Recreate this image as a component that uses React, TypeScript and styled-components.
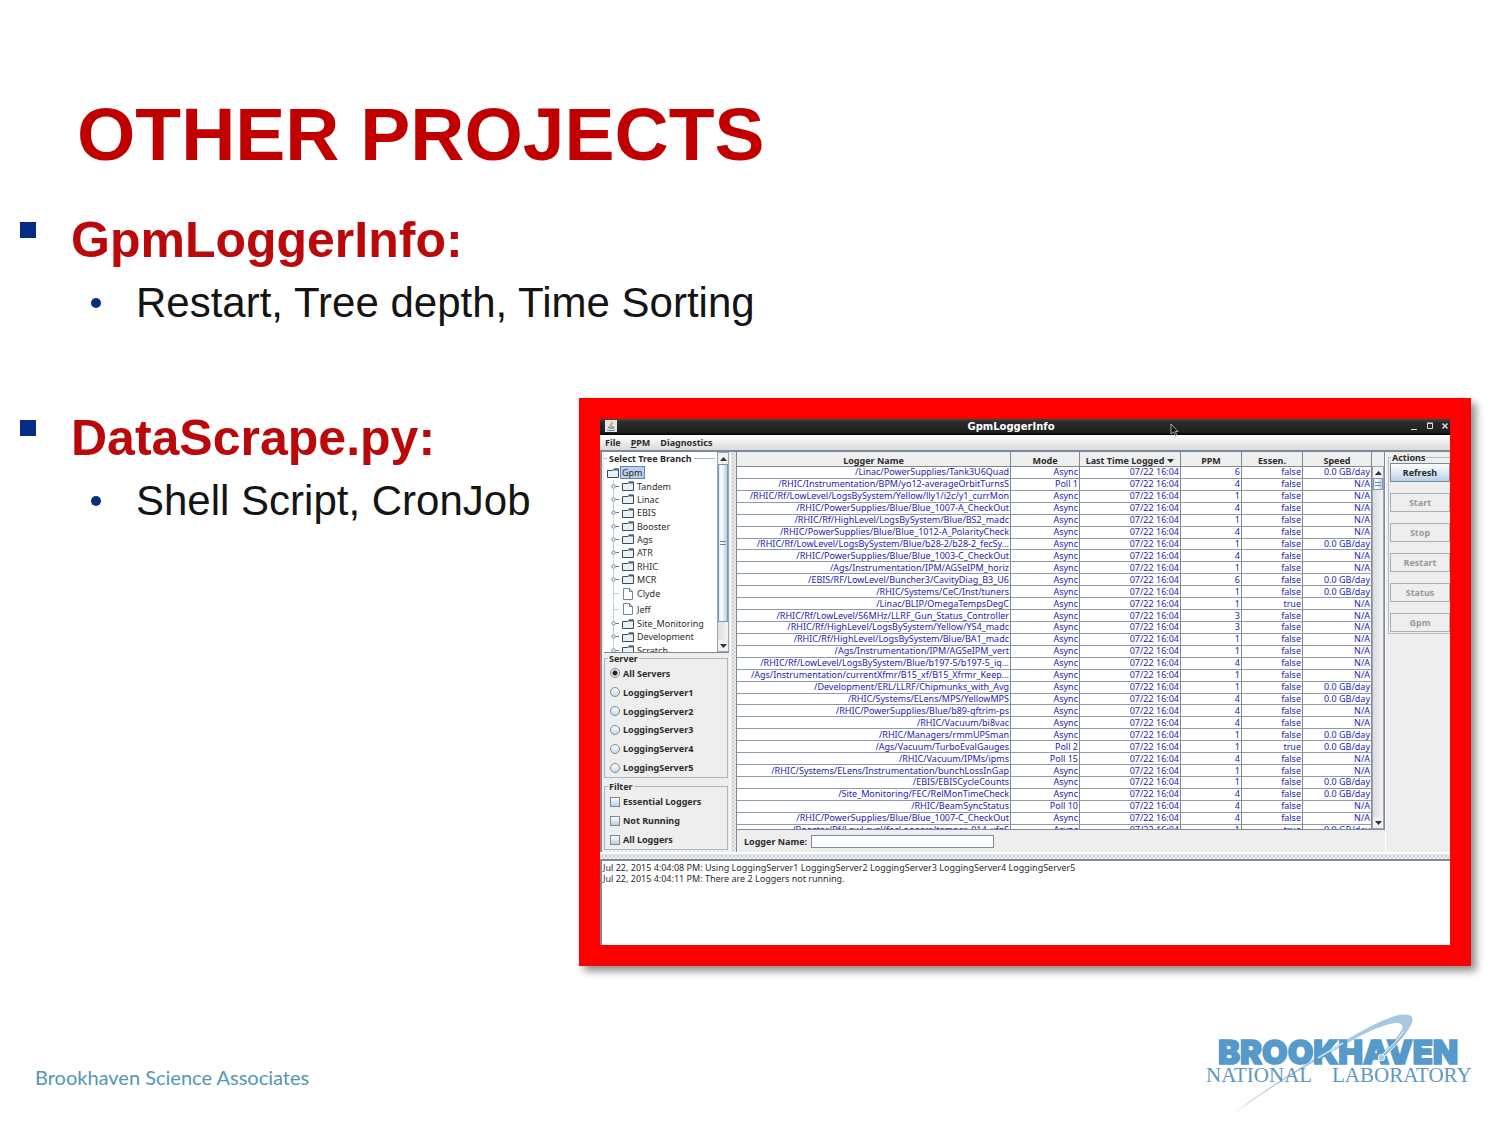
import React from "react";
import styled, { createGlobalStyle, css } from "styled-components";

const ui = `"Noto Sans", "Open Sans", sans-serif`;
const edge = "#7a8a99";
const panel = "#eeeeee";

const Global = createGlobalStyle`
  *, *::before, *::after { box-sizing: border-box; }
  body { margin: 0; background: #fff; font-family: "Liberation Sans", Arial, sans-serif; }
  h1, h2, p, ul { margin: 0; padding: 0; }
  ul { list-style: none; }
  button, input { font: inherit; color: inherit; margin: 0; }
`;

/* ---------- slide ---------- */

const Slide = styled.div`
  min-height: 100vh;
  display: flex;
  flex-direction: column;
  padding-top: 92px;
`;

const Title = styled.h1`
  padding-left: 77px;
  font-size: 75px;
  line-height: 84px;
  color: #c00000;
`;

const Topics = styled.main`
  padding: 34px 29px 0 20px;
`;

const Topic = styled.section`
  display: flex;
  flex-direction: column;
  gap: 8px;
`;

const TopicTitle = styled.h2`
  display: flex;
  gap: 35px;
  font-size: 50px;
  line-height: 60px;
  color: #b9090b;

  &::before {
    content: "";
    width: 16px;
    height: 16px;
    margin-top: 12px;
    background: #062c84;
  }
`;

const Points = styled.ul`
  padding-left: 71px;
  font-size: 42px;
  line-height: 50px;
  color: #141414;
`;

const Point = styled.li`
  display: flex;
  align-items: center;
  gap: 35px;
  white-space: nowrap;

  &::before {
    content: "";
    width: 10px;
    height: 10px;
    border-radius: 50%;
    background: #062c84;
  }
`;

const Split = styled.div`
  display: grid;
  grid-template-columns: 559px minmax(0, 1fr);
  align-items: start;
  padding-top: 70px;

  > ${Topic} { padding-top: 10px; }
`;

const Frame = styled.div`
  padding: 21px;
  background: #fe0000;
  box-shadow: 5px 5px 8px rgba(0, 0, 0, 0.45);
`;

const Footer = styled.footer`
  display: flex;
  justify-content: space-between;
  align-items: center;
  margin-top: auto;
  padding: 0 24px 9px 35px;
`;

const Associates = styled.p`
  padding-top: 28px;
  font-family: Lato, "Open Sans", sans-serif;
  font-size: 20px;
  line-height: 24px;
  color: #5596b6;
`;

/* ---------- application window ---------- */

const Window = styled.div`
  font-family: ${ui};
  font-size: 9px;
  line-height: 11px;
  color: #2c2c2c;
  background: ${panel};
`;

const TitleBar = styled.div`
  position: relative;
  display: grid;
  grid-template-columns: 1fr auto 1fr;
  align-items: center;
  height: 16px;
  padding: 0 0 2px 5px;
  background: linear-gradient(#454545, #2a2c2c 20%, #1f2121 80%, #000);
  color: #fff;
  font-family: "DejaVu Sans", sans-serif;
  font-size: 10px;
  font-weight: 700;
`;

const WindowTitle = styled.span`
  padding-right: 33px;
`;

const Pointer = styled.svg`
  position: absolute;
  left: 67%;
  top: 4px;
`;

const WindowButtons = styled.div`
  display: flex;
  justify-content: flex-end;
  gap: 4px;
`;

const WindowButton = styled.button`
  display: flex;
  padding: 0;
  border: 0;
  background: none;
`;

const MenuBar = styled.nav`
  display: flex;
  gap: 10px;
  height: 17px;
  padding: 0 5px;
  border-bottom: 2px solid ${edge};
  background: linear-gradient(#fff, #dadada);
`;

const MenuButton = styled.button`
  padding: 0;
  border: 0;
  background: none;
  font-weight: 700;
`;

const Body = styled.div`
  display: grid;
  grid-template-columns: 130px 7px minmax(0, 1fr) 64px;
  height: 400px;
`;

const dots = css`
  background-color: #f2f2f2;
  background-image: radial-gradient(circle, #a3abb1 0 0.5px, transparent 1px),
    radial-gradient(circle, #bcc3c8 0 0.5px, transparent 1px);
  background-size: 4px 4px;
  background-position: 0 0, 2px 2px;
`;

const SplitterV = styled.div`
  ${dots}
  border-right: 1px solid ${edge};
  border-left: 1px solid #fff;
`;

const SplitterH = styled.div`
  ${dots}
  height: 9px;
  border-top: 2px solid #fff;
  border-bottom: 2px solid ${edge};
`;

const Sidebar = styled.div`
  display: flex;
  flex-direction: column;
  padding: 0 1px 1px 2px;
  border-left: 2px solid ${edge};
  min-width: 0;
`;

const TreePane = styled.div`
  display: flex;
  height: 201px;
  background: #fff;
  border-bottom: 1px solid ${edge};
`;

const Group = styled.fieldset<{ $spaced?: boolean }>`
  display: flex;
  flex-direction: column;
  min-width: 0;
  margin: 0 1px ${(p) => (p.$spaced ? 3 : 0)}px 0;
  padding: 0 0 0 5px;
  border: 1px solid #a9b5c0;
  font-weight: 700;

  > legend { padding: 0 1px; margin-left: -2px; }
`;

const TreeGroup = styled.div`
  flex: 1;
  min-width: 0;
  overflow: hidden;
`;

const TreeLegend = styled.p`
  display: flex;
  gap: 2px;
  align-items: center;
  padding-top: 1px;
  font-weight: 700;
  white-space: nowrap;

  &::before, &::after { content: ""; height: 1px; background: #a9b5c0; }
  &::before { width: 3px; }
  &::after { flex: 1; margin-right: 2px; }
`;

const Tree = styled.ul`
  display: flex;
  flex-direction: column;
  height: 191px;
  margin-top: 2px;
  padding-left: 3px;
`;

const TreeItem = styled.li<{ $root?: boolean; $leaf?: boolean }>`
  display: flex;
  align-items: center;
  gap: 2px;
  flex: ${(p) => (p.$leaf ? 15 : 13)} 0 0;
  min-height: 0;
  padding-left: ${(p) => (p.$root ? 0 : 3)}px;
  white-space: nowrap;

  > svg { flex: none; }
`;

const NodeName = styled.span<{ $selected?: boolean }>`
  padding: 0 1px;
  ${(p) =>
    p.$selected &&
    css`
      background: #b8cfe5;
      outline: 1px solid #6382bf;
    `}
`;

const Scroll = styled.div`
  display: flex;
  flex-direction: column;
  flex: none;
  width: 12px;
  border: 1px solid #9aa7b3;
  background: linear-gradient(90deg, #dcdcdc, #f4f4f4);
`;

const ScrollArrow = styled.button`
  display: grid;
  place-items: center;
  height: 11px;
  padding: 0;
  border: 0;
  background: #f1f1f1;
`;

const Thumb = styled.div<{ $size: number }>`
  display: grid;
  place-items: center;
  height: ${(p) => p.$size}px;
  border: 1px solid #7c97b8;
  background: linear-gradient(90deg, #d9e7f5, #fff 30%, #b8cfe5);

  &::before {
    content: "";
    width: 6px;
    height: 4px;
    border: solid #6382bf;
    border-width: 1px 0;
  }
`;

const Track = styled.div`
  flex: 1;
`;

const Options = styled.div<{ $rows: number }>`
  display: flex;
  flex-direction: column;
  height: ${(p) => (p.$rows === 6 ? 113 : 57)}px;
`;

const Option = styled.label`
  display: flex;
  align-items: center;
  gap: 3px;
  flex: 1;
  white-space: nowrap;
`;

const Radio = styled.input.attrs({ type: "radio" })`
  appearance: none;
  width: 10px;
  height: 10px;
  border: 1px solid ${edge};
  border-radius: 50%;
  background: linear-gradient(#fff, #c8daec);

  &:checked { background: radial-gradient(circle, #222 0 2px, #e8eef5 3px); }
`;

const Check = styled.input.attrs({ type: "checkbox" })`
  appearance: none;
  width: 10px;
  height: 10px;
  border: 1px solid ${edge};
  background: linear-gradient(#fff, #b8cfe5);
`;

const Center = styled.div`
  display: flex;
  flex-direction: column;
  min-width: 0;
  border-right: 1px solid #fff;
`;

const TableArea = styled.div`
  display: flex;
  height: 378px;
  border-bottom: 1px solid ${edge};
`;

const TableClip = styled.div`
  flex: 1;
  min-width: 0;
  overflow: hidden;
  background: #fff;
`;

const Table = styled.table`
  width: 100%;
  height: 385px;
  table-layout: fixed;
  border-collapse: separate;
  border-spacing: 0;
`;

const Col = styled.col<{ $w?: number }>`
  ${(p) => p.$w && `width: ${p.$w}px;`}
`;

const Head = styled.th`
  height: 15px;
  padding: 2px 0 0;
  border-right: 1px solid ${edge};
  border-bottom: 1px solid ${edge};
  background: ${panel};
  white-space: nowrap;
  line-height: 11px;

  > svg { margin-left: 3px; vertical-align: 1px; }
`;

const Cell = styled.td`
  padding: 0 1px;
  border-right: 1px solid ${edge};
  border-bottom: 1px solid #8f9ca8;
  color: #1c1cb4;
  line-height: 10px;
  text-align: right;
  white-space: nowrap;
`;

const TableScroll = styled.div`
  display: flex;
  flex-direction: column;
  width: 13px;
  padding-top: 14px;
  border-right: 1px solid ${edge};

  > ${Scroll} { flex: 1; }
`;

const NameRow = styled.label`
  display: flex;
  align-items: center;
  gap: 4px;
  flex: 1;
  padding-left: 7px;
  font-weight: 700;
`;

const NameInput = styled.input`
  width: 183px;
  height: 13px;
  padding: 0 2px;
  border: 1px solid ${edge};
  background: #fff;
`;

const ActionsPane = styled.aside`
  padding-left: 2px;
`;

const Actions = styled.fieldset`
  display: flex;
  flex-direction: column;
  gap: 11px;
  margin: 0;
  min-width: 0;
  padding: 0 0 1px 1px;
  border: 1px solid #b5bec7;
  border-right: 0;

  > legend { padding: 0 1px; margin-left: 1px; font-weight: 700; }
`;

const Action = styled.button`
  height: 19px;
  padding: 0;
  border: 1px solid ${edge};
  background: linear-gradient(#fff, #dde8f3 50%, #b8cfe5);
  font-weight: 700;

  &:disabled {
    border-color: #a8afb5;
    background: ${panel};
    color: #999;
  }
`;

const Console = styled.div`
  height: 84px;
  padding: 1px 0 0 1px;
  border-left: 2px solid ${edge};
  background: #fff;
`;

/* ---------- drawings ---------- */

const Arrow = ({ up = false }: { up?: boolean }) => (
  <svg width="7" height="4" viewBox="0 0 7 4" aria-hidden="true">
    <path d={up ? "M0 4 3.5 0 7 4z" : "M0 0 3.5 4 7 0z"} fill="#333" />
  </svg>
);

const Handle = () => (
  <svg width="10" height="13" viewBox="0 0 10 13" aria-hidden="true">
    <path d="M3.5 0v4M3.5 9v4" stroke="#b8cfe5" fill="none" />
    <path d="M5.5 6.500H9" stroke="#5f7da3" fill="none" />
    <circle cx="3.5" cy="6.5" r="1.7" fill="#fff" stroke="#5f7da3" />
  </svg>
);

const Twig = () => (
  <svg width="10" height="15" viewBox="0 0 10 15" aria-hidden="true">
    <path d="M3.5 0v15M3.5 7.5H9" stroke="#b8cfe5" fill="none" />
  </svg>
);

const Folder = () => (
  <svg width="12" height="10" viewBox="0 0 12 10" aria-hidden="true">
    <path d="M.5 2.5H6L7 1h4.500V9.500H.5z" fill="#e9f0f8" stroke="#3b4a5c" />
    <path d="M7 1.500h4.500" stroke="#4d6583" strokeWidth="2" />
  </svg>
);

const Page = () => (
  <svg width="12" height="12" viewBox="0 0 12 12" aria-hidden="true">
    <path d="M1.500.5h6l3 3v8h-9zM7.500.5v3h3" fill="#fff" stroke="#6d87a8" />
  </svg>
);

const JavaIcon = () => (
  <svg width="12" height="12" viewBox="0 0 12 12" aria-hidden="true">
    <path d="M0 0h12v12H0z" fill="#e6e6e2" />
    <path d="M6.500 1.500C8 3 4 4 5.500 6M8 3C6 4.500 7 5 6.500 6" stroke="#c0713a" fill="none" strokeWidth=".8" />
    <path d="M3 7h5c0 2-4 2-5 0M8 7c2 0 1 1.500-.5 1.500M2 10c2 .8 6 .8 8 0" stroke="#5b7690" fill="none" strokeWidth=".9" />
  </svg>
);

const Logo = () => (
  <svg width="276" height="106" viewBox="0 0 276 106" role="img" aria-label="Brookhaven National Laboratory">
    <path
      d="M33 104C70 76 108 52 143 32C168 17 190 5 204 4.500C213 4 214 9 211 15C205 27 194 36 184 46L181 44C190 35 199 26 202 19C204 13 198 12 190 14C174 18 160 26 143 35.500C108 55 70 77 33 104z"
      fill="#a9c9e2"
    />
    <text
      x="18"
      y="54"
      fontFamily="Inter, sans-serif"
      fontWeight="900"
      fontSize="33"
      fill="#559aca"
      stroke="#559aca"
      strokeWidth="1.6"
    >
      BROOKHAVEN
    </text>
    <path d="M118 48 143 33" stroke="#cfe1ef" strokeWidth="1.500" fill="none" />
    <path d="M182 47C192 37 201 29 205 22" stroke="#fff" strokeWidth="3.500" fill="none" />
    <path d="M182 47C192 37 201 29 205 22" stroke="#8db8d9" strokeWidth="2" fill="none" />
    <circle cx="181.500" cy="47.500" r="3.200" fill="#a9c9e2" stroke="#fff" />
    <g fontFamily="'Liberation Serif', serif" fontSize="21" fill="#5f97bd">
      <text x="6" y="72">NATIONAL</text>
      <text x="132" y="72">LABORATORY</text>
    </g>
  </svg>
);

/* ---------- data ---------- */

const branches = [
  "Tandem", "Linac", "EBIS", "Booster", "Ags", "ATR", "RHIC", "MCR",
  "Clyde", "Jeff", "Site_Monitoring", "Development", "Scratch",
];
const leaves = ["Clyde", "Jeff"];

const servers = [
  "All Servers", "LoggingServer1", "LoggingServer2",
  "LoggingServer3", "LoggingServer4", "LoggingServer5",
];
const filters = ["Essential Loggers", "Not Running", "All Loggers"];
const actions = ["Refresh", "Start", "Stop", "Restart", "Status", "Gpm"];

const GB = "0.0 GB/day";
const NA = "N/A";
type Logger = [name: string, mode: string, ppm: number, essential: boolean, speed: string];

const loggers: Logger[] = [
  ["/Linac/PowerSupplies/Tank3U6Quad", "Async", 6, false, GB],
  ["/RHIC/Instrumentation/BPM/yo12-averageOrbitTurnsS", "Poll 1", 4, false, NA],
  ["/RHIC/Rf/LowLevel/LogsBySystem/Yellow/lly1/i2c/y1_currMon", "Async", 1, false, NA],
  ["/RHIC/PowerSupplies/Blue/Blue_1007-A_CheckOut", "Async", 4, false, NA],
  ["/RHIC/Rf/HighLevel/LogsBySystem/Blue/BS2_madc", "Async", 1, false, NA],
  ["/RHIC/PowerSupplies/Blue/Blue_1012-A_PolarityCheck", "Async", 4, false, NA],
  ["/RHIC/Rf/LowLevel/LogsBySystem/Blue/b28-2/b28-2_fecSy...", "Async", 1, false, GB],
  ["/RHIC/PowerSupplies/Blue/Blue_1003-C_CheckOut", "Async", 4, false, NA],
  ["/Ags/Instrumentation/IPM/AGSeIPM_horiz", "Async", 1, false, NA],
  ["/EBIS/RF/LowLevel/Buncher3/CavityDiag_B3_U6", "Async", 6, false, GB],
  ["/RHIC/Systems/CeC/Inst/tuners", "Async", 1, false, GB],
  ["/Linac/BLIP/OmegaTempsDegC", "Async", 1, true, NA],
  ["/RHIC/Rf/LowLevel/56MHz/LLRF_Gun_Status_Controller", "Async", 3, false, NA],
  ["/RHIC/Rf/HighLevel/LogsBySystem/Yellow/YS4_madc", "Async", 3, false, NA],
  ["/RHIC/Rf/HighLevel/LogsBySystem/Blue/BA1_madc", "Async", 1, false, NA],
  ["/Ags/Instrumentation/IPM/AGSeIPM_vert", "Async", 1, false, NA],
  ["/RHIC/Rf/LowLevel/LogsBySystem/Blue/b197-5/b197-5_iq...", "Async", 4, false, NA],
  ["/Ags/Instrumentation/currentXfmr/B15_xf/B15_Xfrmr_Keep...", "Async", 1, false, NA],
  ["/Development/ERL/LLRF/Chipmunks_with_Avg", "Async", 1, false, GB],
  ["/RHIC/Systems/ELens/MPS/YellowMPS", "Async", 4, false, GB],
  ["/RHIC/PowerSupplies/Blue/b89-qftrim-ps", "Async", 4, false, NA],
  ["/RHIC/Vacuum/bi8vac", "Async", 4, false, NA],
  ["/RHIC/Managers/rmmUPSman", "Async", 1, false, GB],
  ["/Ags/Vacuum/TurboEvalGauges", "Poll 2", 1, true, GB],
  ["/RHIC/Vacuum/IPMs/ipms", "Poll 15", 4, false, NA],
  ["/RHIC/Systems/ELens/Instrumentation/bunchLossInGap", "Async", 1, false, NA],
  ["/EBIS/EBISCycleCounts", "Async", 1, false, GB],
  ["/Site_Monitoring/FEC/RelMonTimeCheck", "Async", 4, false, GB],
  ["/RHIC/BeamSyncStatus", "Poll 10", 4, false, NA],
  ["/RHIC/PowerSupplies/Blue/Blue_1007-C_CheckOut", "Async", 4, false, NA],
  ["/Booster/Rf/LowLevel/fecLoggers/temper_014_xfgS", "Async", 1, true, GB],
];

/* ---------- window parts ---------- */

const ScrollBar = ({ thumb }: { thumb: number }) => (
  <Scroll>
    <ScrollArrow aria-label="Scroll up"><Arrow up /></ScrollArrow>
    <Thumb $size={thumb} />
    <Track />
    <ScrollArrow aria-label="Scroll down"><Arrow /></ScrollArrow>
  </Scroll>
);

const LoggerTable = () => (
  <Table>
    <colgroup>
      <Col />
      <Col $w={69} />
      <Col $w={101} />
      <Col $w={61} />
      <Col $w={61} />
      <Col $w={69} />
    </colgroup>
    <thead>
      <tr>
        <Head>Logger Name</Head>
        <Head>Mode</Head>
        <Head>Last Time Logged<Arrow /></Head>
        <Head>PPM</Head>
        <Head>Essen.</Head>
        <Head>Speed</Head>
      </tr>
    </thead>
    <tbody>
      {loggers.map(([name, mode, ppm, essential, speed]) => (
        <tr key={name}>
          <Cell>{name}</Cell>
          <Cell>{mode}</Cell>
          <Cell>07/22 16:04</Cell>
          <Cell>{ppm}</Cell>
          <Cell>{String(essential)}</Cell>
          <Cell>{speed}</Cell>
        </tr>
      ))}
    </tbody>
  </Table>
);

const LoggerWindow = () => (
  <Window>
    <TitleBar>
      <JavaIcon />
      <WindowTitle>GpmLoggerInfo</WindowTitle>
      <WindowButtons>
        <WindowButton aria-label="Minimize">
          <svg width="12" height="10" viewBox="0 0 12 10"><path d="M3 8.500h6" stroke="#ddd" /></svg>
        </WindowButton>
        <WindowButton aria-label="Maximize">
          <svg width="12" height="10" viewBox="0 0 12 10"><path d="M3.500 2.500h5v5h-5zM3 2h6" stroke="#ddd" fill="none" /></svg>
        </WindowButton>
        <WindowButton aria-label="Close">
          <svg width="10" height="10" viewBox="0 0 10 10"><path d="M2.500 2.500l5 5m0-5l-5 5" stroke="#ddd" strokeWidth="1.500" /></svg>
        </WindowButton>
      </WindowButtons>
      <Pointer width="10" height="14" viewBox="0 0 10 14" aria-hidden="true">
        <path d="M1 1v10l2.500-2 2 4 1.500-.8-1.800-3.700H8z" fill="#111" stroke="#ccc" strokeWidth=".8" />
      </Pointer>
    </TitleBar>
    <MenuBar>
      <MenuButton>File</MenuButton>
      <MenuButton><u>P</u>PM</MenuButton>
      <MenuButton>Diagnostics</MenuButton>
    </MenuBar>
    <Body>
      <Sidebar>
        <TreePane>
          <TreeGroup>
            <TreeLegend>Select Tree Branch</TreeLegend>
            <Tree>
              <TreeItem $root>
                <Folder />
                <NodeName $selected>Gpm</NodeName>
              </TreeItem>
              {branches.map((name) => {
                const leaf = leaves.includes(name);
                return (
                  <TreeItem key={name} $leaf={leaf}>
                    {leaf ? <Twig /> : <Handle />}
                    {leaf ? <Page /> : <Folder />}
                    <NodeName>{name}</NodeName>
                  </TreeItem>
                );
              })}
            </Tree>
          </TreeGroup>
          <ScrollBar thumb={158} />
        </TreePane>
        <Group $spaced>
          <legend>Server</legend>
          <Options $rows={6}>
            {servers.map((name, i) => (
              <Option key={name}>
                <Radio name="server" defaultChecked={i === 0} />
                {name}
              </Option>
            ))}
          </Options>
        </Group>
        <Group>
          <legend>Filter</legend>
          <Options $rows={3}>
            {filters.map((name) => (
              <Option key={name}>
                <Check />
                {name}
              </Option>
            ))}
          </Options>
        </Group>
      </Sidebar>
      <SplitterV />
      <Center>
        <TableArea>
          <TableClip>
            <LoggerTable />
          </TableClip>
          <TableScroll>
            <ScrollBar thumb={12} />
          </TableScroll>
        </TableArea>
        <NameRow>
          Logger Name:
          <NameInput type="text" />
        </NameRow>
      </Center>
      <ActionsPane>
        <Actions>
          <legend>Actions</legend>
          {actions.map((name, i) => (
            <Action key={name} type="button" disabled={i > 0}>{name}</Action>
          ))}
        </Actions>
      </ActionsPane>
    </Body>
    <SplitterH />
    <Console>
      <p>Jul 22, 2015 4:04:08 PM: Using LoggingServer1 LoggingServer2 LoggingServer3 LoggingServer4 LoggingServer5</p>
      <p>Jul 22, 2015 4:04:11 PM: There are 2 Loggers not running.</p>
    </Console>
  </Window>
);

export default function App() {
  return (
    <Slide>
      <Global />
      <Title>OTHER PROJECTS</Title>
      <Topics>
        <Topic>
          <TopicTitle>GpmLoggerInfo:</TopicTitle>
          <Points>
            <Point>Restart, Tree depth, Time Sorting</Point>
          </Points>
        </Topic>
        <Split>
          <Topic>
            <TopicTitle>DataScrape.py:</TopicTitle>
            <Points>
              <Point>Shell Script, CronJob</Point>
            </Points>
          </Topic>
          <Frame>
            <LoggerWindow />
          </Frame>
        </Split>
      </Topics>
      <Footer>
        <Associates>Brookhaven Science Associates</Associates>
        <Logo />
      </Footer>
    </Slide>
  );
}
